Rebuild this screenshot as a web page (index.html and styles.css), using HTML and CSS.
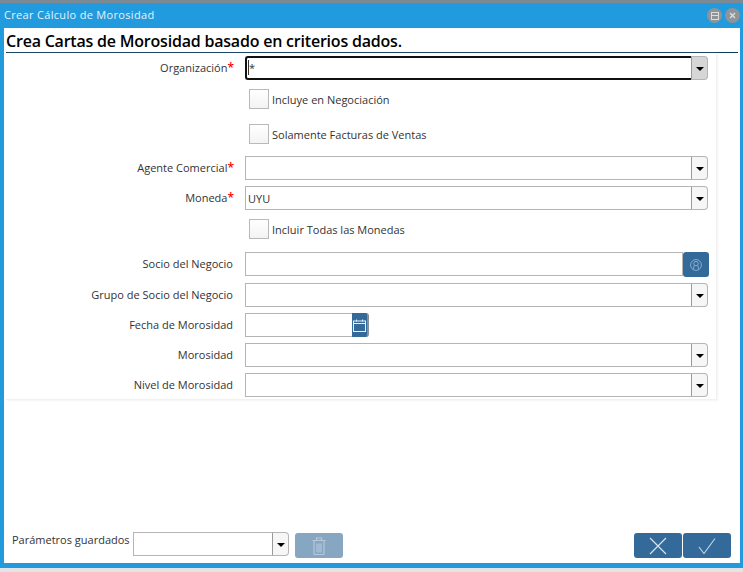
FILE: index.html
```html
<!DOCTYPE html>
<html>
  <head>
    <meta charset="utf-8">
    <title>Crear Cálculo de Morosidad</title>
    <link rel="stylesheet" href="styles.css">
  </head>
  <body>
    <div class="window">
      <!-- Barra de titulo -->
      <div class="titleBar">
        <span class="titleText">Crear Cálculo de Morosidad</span>
        <span class="winIcons">
          <span class="winIcon">
            <svg width="8" height="8" viewBox="0 0 8 8"><rect x="0.5" y="0.5" width="7" height="7" fill="none" stroke="#ddd" stroke-width="1"/><path d="M0.5 3.5h7" stroke="#ddd" stroke-width="1"/></svg>
          </span>
          <span class="winIcon">
            <svg width="7" height="7" viewBox="0 0 7 7"><path d="M1 1l5 5M6 1l-5 5" stroke="#ddd" stroke-width="1.4"/></svg>
          </span>
        </span>
      </div>

      <div class="content">
        <h1 class="helpTitle">Crea Cartas de Morosidad basado en criterios dados.</h1>

        <div class="formPanel">
          <div class="row">
            <label class="fieldLabel">Organización<span class="req">*</span></label>
            <div class="combo comboFocus">
              <span class="comboInput"><span class="textCursor">*</span></span>
              <span class="comboBtn comboBtnGrey"><i class="caret"></i></span>
            </div>
          </div>

          <div class="checkRow first">
            <span class="check"></span><span class="checkText">Incluye en Negociación</span>
          </div>
          <div class="checkRow second">
            <span class="check"></span><span class="checkText">Solamente Facturas de Ventas</span>
          </div>

          <div class="row afterCheck">
            <label class="fieldLabel">Agente Comercial<span class="req">*</span></label>
            <div class="combo">
              <span class="comboInput"></span>
              <span class="comboBtn"><i class="caret"></i></span>
            </div>
          </div>
          <div class="row">
            <label class="fieldLabel">Moneda<span class="req">*</span></label>
            <div class="combo">
              <span class="comboInput">UYU</span>
              <span class="comboBtn"><i class="caret"></i></span>
            </div>
          </div>

          <div class="checkRow third">
            <span class="check"></span><span class="checkText">Incluir Todas las Monedas</span>
          </div>

          <div class="row afterThird">
            <label class="fieldLabel">Socio del Negocio</label>
            <div class="search">
              <span class="searchInput"></span>
              <span class="blueBtn searchBtn">
                <svg width="12" height="12" viewBox="0 0 12 12" fill="none" stroke="#8fb3d3" stroke-width="0.9"><circle cx="6" cy="6" r="5.4"/><circle cx="6" cy="4.6" r="2.2"/><path d="M4 6.5L3.5 10.5M8 6.5L8.5 10.5"/></svg>
              </span>
            </div>
          </div>
          <div class="row">
            <label class="fieldLabel">Grupo de Socio del Negocio</label>
            <div class="combo">
              <span class="comboInput"></span>
              <span class="comboBtn"><i class="caret"></i></span>
            </div>
          </div>
          <div class="row">
            <label class="fieldLabel">Fecha de Morosidad</label>
            <div class="dateBox">
              <span class="dateInput"></span>
              <span class="dateBtn">
                <svg width="13" height="13" viewBox="0 0 13 13" fill="none" stroke="#e6f0f8" stroke-width="1"><rect x="0.5" y="2" width="12" height="10.5"/><path d="M0.5 4.5h12" /><path d="M3.5 0.5v2M9.5 0.5v2"/></svg>
              </span>
            </div>
          </div>
          <div class="row">
            <label class="fieldLabel">Morosidad</label>
            <div class="combo">
              <span class="comboInput"></span>
              <span class="comboBtn"><i class="caret"></i></span>
            </div>
          </div>
          <div class="row">
            <label class="fieldLabel">Nivel de Morosidad</label>
            <div class="combo">
              <span class="comboInput"></span>
              <span class="comboBtn"><i class="caret"></i></span>
            </div>
          </div>
        </div>

        <!-- Pie con parametros y acciones -->
        <div class="footer">
          <span class="savedLabel">Parámetros guardados</span>
          <div class="combo savedCombo">
            <span class="comboInput"></span>
            <span class="comboBtn"><i class="caret"></i></span>
          </div>
          <span class="blueBtn trashBtn">
            <svg width="14" height="18" viewBox="0 0 14 18" fill="none" stroke="#b4c9dc" stroke-width="1.2"><path d="M0.5 3.5h13M4.5 3V1h5v2"/><path d="M2 4v12.5q0 1 1 1h8q1 0 1-1V4"/><path d="M5 6.5v9M7 6.5v9M9 6.5v9"/></svg>
          </span>
          <span class="actions">
            <span class="blueBtn actionBtn">
              <svg width="18" height="18" viewBox="0 0 18 18" stroke="#dbe6f0" stroke-width="1.1"><path d="M1 1l16 16M17 1L1 17"/></svg>
            </span>
            <span class="blueBtn actionBtn">
              <svg width="18" height="16" viewBox="0 0 18 16" fill="none" stroke="#c4d6e6" stroke-width="1.1"><path d="M1 9l5 6.5L17 0.5"/></svg>
            </span>
          </span>
        </div>
      </div>
    </div>
  </body>
</html>
```

FILE: styles.css
```css
html, body {
  height: 100%;
}

body {
  margin: 0;
  background: #e4e4e4;
  font-family: "Open Sans", "Noto Sans", sans-serif;
  font-size: 11px;
  color: #333;
  overflow: hidden;
}

.window {
  box-sizing: border-box;
  height: 568px;
  border-top: 3px solid #7b8a94;
  background: #219bdd;
  padding: 0 3px 5px 4px;
  display: flex;
  flex-direction: column;
}

.titleBar {
  height: 25px;
  flex: none;
  display: flex;
  align-items: center;
  justify-content: space-between;
}

.titleText {
  color: #e4f2fb;
  font-size: 11px;
  letter-spacing: 0.32px;
  margin-bottom: 2px;
}

.winIcons {
  display: flex;
  gap: 3px;
}

.winIcon {
  width: 15px;
  height: 15px;
  border-radius: 50%;
  background: #8f9499;
  display: flex;
  align-items: center;
  justify-content: center;
}

.content {
  flex: 1;
  background: #fff;
  display: flex;
  flex-direction: column;
  padding: 0 2px;
}

.helpTitle {
  margin: 0;
  height: 24px;
  line-height: 26px;
  font-size: 16px;
  font-weight: 600;
  letter-spacing: -0.21px;
  color: #000;
  border-bottom: 1px solid #0a3a5c;
  white-space: nowrap;
}

.formPanel {
  width: 711px;
  height: 347px;
  padding-top: 3px;
  box-sizing: border-box;
  border-right: 1px solid #f1f1f1;
  border-bottom: 1px solid #f1f1f1;
  box-shadow: 1px 1px 2px #f4f4f4;
}

.row {
  display: flex;
  align-items: center;
  height: 24px;
  margin-bottom: 6px;
}

.fieldLabel {
  width: 227px;
  text-align: right;
  white-space: nowrap;
  flex: none;
  margin-right: 12px;
  padding-bottom: 2px;
}

.req {
  color: #f00;
  font-size: 12px;
  font-weight: 600;
  margin-right: -1px;
}

.combo {
  flex: none;
  width: 463px;
  height: 24px;
  display: flex;
  box-sizing: border-box;
  background: #fff;
}

.comboInput {
  flex: 1;
  box-sizing: border-box;
  border: 1px solid #b5b5b5;
  border-right: 0;
  padding-left: 2px;
  line-height: 23px;
  color: #333;
}

.comboBtn {
  flex: none;
  width: 17px;
  box-sizing: border-box;
  border: 1px solid #b5b5b5;
  border-left-color: #999;
  border-radius: 0 4px 4px 0;
  background: #f6f6f6;
  display: flex;
  align-items: center;
  justify-content: center;
}

.comboBtnGrey {
  background: #d6d6d6;
}

.caret {
  width: 0;
  height: 0;
  border-left: 4px solid transparent;
  border-right: 4px solid transparent;
  border-top: 4px solid #000;
  margin-top: 2px;
}

.comboFocus .comboInput {
  border: 2px solid #111;
  border-right: 0;
  border-radius: 3px 0 0 3px;
  padding-left: 1px;
  line-height: 20px;
}

.textCursor {
  border-left: 1px solid #333;
}

.checkRow {
  display: flex;
  align-items: center;
  height: 20px;
  padding-left: 243px;
}

.checkRow.first {
  margin-top: 9px;
}

.checkRow.second {
  margin-top: 15px;
}

.checkRow.third {
  margin-top: 9px;
}

.afterCheck {
  margin-top: 12px;
}

.afterThird {
  margin-top: 13px;
  margin-bottom: 7px;
}

.check {
  width: 20px;
  height: 20px;
  box-sizing: border-box;
  border: 1px solid #b9b9b9;
  background: linear-gradient(#fff, #f3f3f3);
  margin-right: 3px;
}

.search {
  display: flex;
  width: 464px;
  height: 24px;
}

.searchInput {
  flex: 1;
  border: 1px solid #b5b5b5;
}

.blueBtn {
  background: #346a9a;
  border-radius: 3px;
  display: flex;
  align-items: center;
  justify-content: center;
  box-sizing: border-box;
}

.searchBtn {
  flex: none;
  width: 26px;
  height: 25px;
}

.dateBox {
  display: flex;
  width: 124px;
  height: 24px;
}

.dateInput {
  flex: 1;
  border: 1px solid #b5b5b5;
  border-right: 0;
}

.dateBtn {
  flex: none;
  width: 17px;
  background: #346a9a;
  border-right: 2px solid #8a8f94;
  box-sizing: border-box;
  border-radius: 0 3px 3px 0;
  display: flex;
  align-items: center;
  justify-content: center;
}

.footer {
  flex: 1;
  display: flex;
  align-items: flex-start;
  padding: 132px 0 0 6px;
  box-sizing: border-box;
}

.savedLabel {
  width: 121px;
  flex: none;
  line-height: 15px;
  white-space: nowrap;
}

.savedCombo {
  width: 156px;
  margin-right: 6px;
}

.trashBtn {
  width: 48px;
  height: 25px;
  margin-top: 1px;
  background: #86a6c2;
}

.actions {
  display: flex;
  gap: 1px;
  margin-left: 291px;
  margin-top: 1px;
}

.actionBtn {
  width: 48px;
  height: 25px;
}
```
